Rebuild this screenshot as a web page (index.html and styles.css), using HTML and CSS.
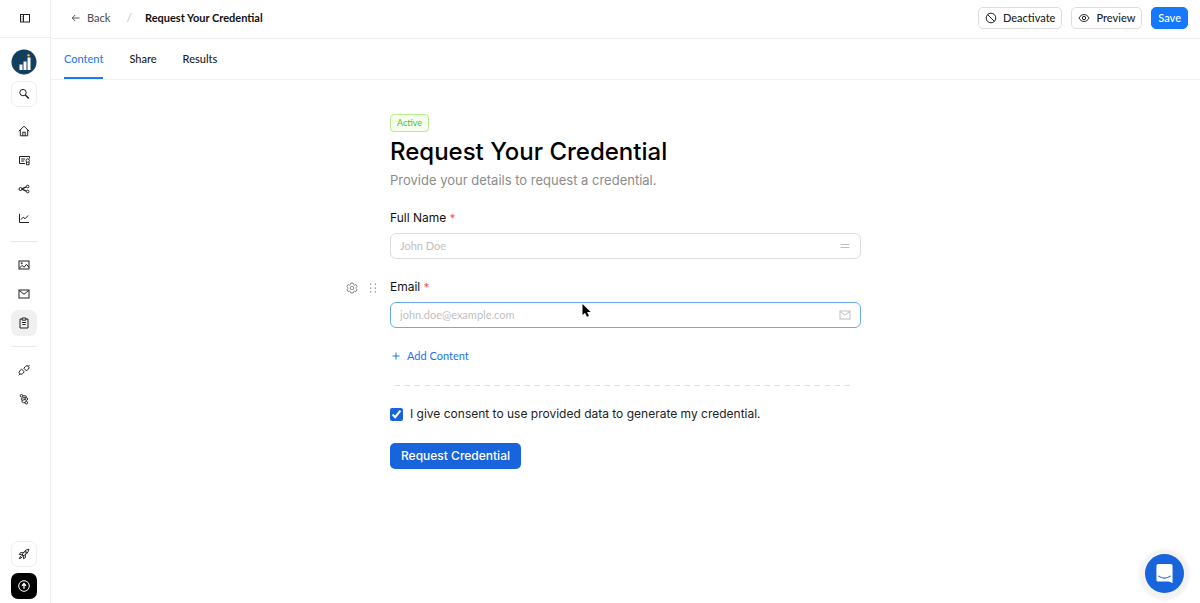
FILE: index.html
```html
<!DOCTYPE html>
<html lang="en">
<head>
  <meta charset="utf-8">
  <meta name="viewport" content="width=device-width, initial-scale=1">
  <title>Request Your Credential</title>
  <link rel="stylesheet" href="styles.css">
</head>
<body>
  <div class="app">
    <aside class="sidebar">
      <div class="sidebar_top">
        <button class="icon_btn" type="button" aria-label="Toggle sidebar">
          <svg class="icon" viewBox="0 0 12 12"><rect x="1.500" y="2.500" width="9" height="7.500"/><path d="M4.500 2.500v7.500M2.700 4.400h.8M2.700 6.200h.8M2.700 8h.8"/></svg>
        </button>
      </div>
      <nav class="sidebar_nav">
        <a class="logo" href="#" aria-label="Workspace">
          <svg class="logo_img" viewBox="0 0 26 26">
            <circle cx="13" cy="13" r="12.500" fill="#133f5f"/>
            <path d="M8.500 15.500h3V21h-3zM12.500 12.500h3V21h-3zM16.500 8.500h3V21h-3z" fill="#fff"/>
            <circle cx="17.500" cy="6.200" r="1.200" fill="#f0b440"/>
          </svg>
        </a>
        <button class="icon_btn boxed search" type="button" aria-label="Search">
          <svg class="icon" viewBox="0 0 12 12"><circle cx="5" cy="4.600" r="3.200"/><path d="M7.300 7l3.500 3.500" stroke-width="1.600"/></svg>
        </button>
        <a class="icon_btn" href="#" aria-label="Home">
          <svg class="icon" viewBox="0 0 12 12"><path d="M.8 6.200L6 1.200l5.200 5M2.300 5v5.800h7.400V5M4.800 10.800V7.200h2.400v3.600"/></svg>
        </a>
        <a class="icon_btn" href="#" aria-label="Credentials">
          <svg class="icon" viewBox="0 0 12 12"><path d="M7 9.500H1.500v-7h10v2M3.200 5h3.800M3.200 7h3"/><circle cx="9.700" cy="6.500" r="1.700"/><path d="M8.400 8v2.800h2.700V8"/></svg>
        </a>
        <a class="icon_btn" href="#" aria-label="Pathways">
          <svg class="icon" viewBox="0 0 12 12"><circle cx="2.500" cy="6" r="1.500"/><circle cx="9.700" cy="3.500" r="1.300"/><circle cx="9.700" cy="8.500" r="1.300"/><path d="M4 5.800l4.300-2M4 6.200l4.300 2" stroke-width="1.400"/></svg>
        </a>
        <a class="icon_btn" href="#" aria-label="Analytics">
          <svg class="icon" viewBox="0 0 12 12"><path d="M1.500 1.800v8.700h9.500M3 7.500l2.200-2.300 1.800 1.500L10.200 3.500"/></svg>
        </a>
        <hr class="divider">
        <a class="icon_btn" href="#" aria-label="Designs">
          <svg class="icon" viewBox="0 0 12 12"><rect x="1" y="2" width="10" height="8"/><path d="M1.500 9l2.700-2.700L6 8.300l2.500-3L11 8.500"/><circle cx="3.700" cy="4.200" r=".6"/></svg>
        </a>
        <a class="icon_btn" href="#" aria-label="Emails">
          <svg class="icon" viewBox="0 0 12 12"><rect x="1" y="2" width="10" height="8"/><path d="M1.300 2.500L6 6.200l4.700-3.700"/></svg>
        </a>
        <a class="icon_btn active" href="#" aria-label="Forms">
          <svg class="icon" viewBox="0 0 12 12"><path d="M4 2H2v9h8V2H8M4.200 1h3.600v2.200H4.200zM4 5.500h4M4.500 7.500h3"/></svg>
        </a>
        <hr class="divider">
        <a class="icon_btn" href="#" aria-label="Integrations">
          <svg class="icon" viewBox="0 0 12 12"><path d="M5.800 4.200l1.900-1.900a1.900 1.900 0 0 1 2.700 0 1.900 1.900 0 0 1 0 2.700L8.500 6.900zM3.500 5.100L1.700 7a1.900 1.900 0 0 0 0 2.700 1.900 1.900 0 0 0 2.700 0l1.900-1.900zM10.300 2.300l1.200-1.200M.7 11.200l1.200-1.200"/></svg>
        </a>
        <a class="icon_btn" href="#" aria-label="Webhooks">
          <svg class="icon" viewBox="0 0 12 12"><circle cx="3.500" cy="2.800" r="1.300"/><circle cx="8.300" cy="6" r="1.300"/><circle cx="8.300" cy="9.700" r="1.300"/><path d="M4.800 2.800h2.500c1.500 0 1.500 1.600 0 1.700L4.500 5c-1.600.2-1.700 2-.2 2.200l2.700-.6M4.300 7.200c-1 1.200 0 2.400 1.300 2.500H7"/></svg>
        </a>
      </nav>
      <div class="sidebar_bottom">
        <button class="icon_btn boxed" type="button" aria-label="Get started">
          <svg class="icon" viewBox="0 0 12 12"><path d="M4 7.900C4.700 4.500 7 1.800 10.800 1.200 10.300 5 7.500 7.400 4.100 8zM4.800 4.600L2.400 4.700 1.300 6.500l2.600.2M7.400 7.200l-.1 2.400-1.800 1.100-.2-2.600M2.700 8L1.200 10.800 4 9.300"/><circle cx="7.700" cy="4.300" r=".8"/></svg>
        </button>
        <button class="icon_btn dark" type="button" aria-label="Upgrade">
          <svg class="icon" viewBox="0 0 12 12"><circle cx="6" cy="6" r="5.300"/><path d="M6 8.700V4M4 5.700l2-2.200 2 2.200" stroke-width="1.300"/></svg>
        </button>
      </div>
    </aside>

    <div class="page">
      <header class="topbar">
        <a class="back" href="#">
          <svg class="icon" viewBox="0 0 12 12"><path d="M9.500 6H2.200M5.200 3L2.200 6l3 3"/></svg>
          Back
        </a>
        <span class="slash">/</span>
        <span class="crumb">Request Your Credential</span>
        <div class="actions">
          <button class="btn" type="button">
            <svg class="icon" viewBox="0 0 12 12"><circle cx="6" cy="6" r="4.800"/><path d="M2.600 2.600l6.800 6.800"/></svg>
            Deactivate
          </button>
          <button class="btn" type="button">
            <svg class="icon" viewBox="0 0 12 12"><path d="M1 6c2.200-4.600 7.800-4.600 10 0-2.200 4.600-7.800 4.600-10 0z"/><circle cx="6" cy="6" r="1.700"/></svg>
            Preview
          </button>
          <button class="btn btn_save" type="button">Save</button>
        </div>
      </header>

      <nav class="tabs">
        <a class="tab tab_on" href="#">Content</a>
        <a class="tab" href="#">Share</a>
        <a class="tab" href="#">Results</a>
      </nav>

      <main class="main">
        <form class="form">
          <div class="intro">
            <span class="badge">Active</span>
            <h1 class="title">Request Your Credential</h1>
            <p class="subtitle">Provide your details to request a credential.</p>
          </div>

          <div class="field">
            <label class="label" for="full_name">Full Name <span class="req">*</span></label>
            <div class="input_wrap">
              <input class="input" id="full_name" type="text" placeholder="John Doe">
              <svg class="icon input_icon" viewBox="0 0 12 12"><path d="M1.500 4.500h9M1.500 7.500h9"/></svg>
            </div>
          </div>

          <div class="tools">
            <button class="tool" type="button" aria-label="Field settings">
              <svg class="icon" viewBox="0 0 12 12"><path d="M4.900 1h2.200l.4 1.500 1 .6L10 2.700l1.100 1.900L10 5.700v.9l1.100 1-1.100 1.900-1.500-.4-1 .6L7.100 11H4.900l-.4-1.300-1-.6-1.500.4L.9 7.600l1.100-1v-.9L.9 4.600 2 2.700l1.500.4 1-.6z"/><circle cx="6" cy="6" r="1.700"/></svg>
            </button>
            <button class="tool" type="button" aria-label="Move field">
              <svg class="icon dots" viewBox="0 0 12 12"><path d="M3 1.500h1.300v1.300H3zM3 5.400h1.300v1.300H3zM3 9.200h1.300v1.300H3zM7.700 1.500H9v1.300H7.700zM7.700 5.400H9v1.300H7.700zM7.700 9.200H9v1.300H7.700z"/></svg>
            </button>
          </div>
          <div class="field">
            <label class="label" for="email">Email <span class="req">*</span></label>
            <div class="input_wrap focused">
              <input class="input" id="email" type="email" placeholder="john.doe@example.com">
              <svg class="icon input_icon" viewBox="0 0 12 12"><rect x="1" y="2" width="10" height="8"/><path d="M1.300 2.500L6 6.200l4.700-3.700"/></svg>
            </div>
          </div>

          <button class="add" type="button">
            <svg class="icon" viewBox="0 0 12 12"><path d="M6 2.500v7M2.500 6h7"/></svg>
            Add Content
          </button>
          <div class="dashes"></div>

          <label class="consent">
            <input class="check" type="checkbox" checked>
            I give consent to use provided data to generate my credential.
          </label>
          <button class="submit" type="button">Request Credential</button>
        </form>
      </main>
    </div>
  </div>

  <svg class="cursor" viewBox="0 0 12 16"><path d="M1.500 1v11l2.600-2.300 1.800 4.100 2-.9-1.800-4h3.500z"/></svg>

  <button class="chat" type="button" aria-label="Open chat">
    <svg class="chat_icon" viewBox="0 0 20 22">
      <path d="M3.500 1h13A2 2 0 0 1 18.500 3v18l-4-1.500h-11a2 2 0 0 1-2-2V3a2 2 0 0 1 2-2z" fill="#fff"/>
      <path d="M4 13.800c3.500 2.800 8.500 2.800 12 0" fill="none" stroke="#1764dc" stroke-width="1.200" stroke-linecap="round"/>
    </svg>
  </button>
</body>
</html>
```
FILE: styles.css
```css
* {
  box-sizing: border-box;
}
body {
  margin: 0;
  background: #fff;
  color: #222;
  font-family: Lato, "Noto Sans", sans-serif;
  font-size: 11px;
  font-weight: 500;
  line-height: 16px;
}
a {
  color: inherit;
  text-decoration: none;
}
button {
  font: inherit;
  color: inherit;
  padding: 0;
  border: 0;
  background: none;
  cursor: pointer;
}
.icon {
  display: block;
  flex: none;
  width: 12px;
  height: 12px;
  fill: none;
  stroke: currentColor;
  stroke-width: 1;
}
.app {
  display: flex;
  min-height: 100vh;
}

/* sidebar */
.sidebar {
  display: flex;
  flex-direction: column;
  width: 51px;
  border-right: 1px solid #f0f0f0;
}
.sidebar_top {
  display: flex;
  align-items: center;
  justify-content: center;
  height: 38px;
  padding-bottom: 2px;
  border-bottom: 1px solid #f0f0f0;
}
.sidebar_nav {
  display: flex;
  flex-direction: column;
  align-items: center;
  gap: 3px;
  padding: 11px 2px 0 0;
}
.logo_img {
  display: block;
  width: 26px;
  height: 26px;
}
.icon_btn {
  display: flex;
  flex: none;
  align-items: center;
  justify-content: center;
  width: 26px;
  height: 26px;
  border-radius: 7px;
}
.boxed {
  border: 1px solid #eee;
}
.search {
  margin: 3px 0 8px;
}
.active {
  background: #f0f0f0;
}
.dark {
  background: #000;
  color: #fff;
}
.divider {
  width: 26px;
  height: 1px;
  margin: 7px 0;
  border: 0;
  background: #eaeaea;
}
.sidebar_bottom {
  display: flex;
  flex-direction: column;
  align-items: center;
  gap: 6px;
  margin-top: auto;
  padding: 0 2px 4px 0;
}

/* header */
.page {
  flex: 1;
  min-width: 0;
}
.topbar {
  display: flex;
  align-items: center;
  height: 39px;
  padding: 0 12px 3px 19px;
  border-bottom: 1px solid #f0f0f0;
}
.back {
  display: flex;
  align-items: center;
  gap: 5px;
  color: #555;
}
.slash {
  margin: 0 13px 0 16px;
  color: #ccc;
  font-size: 12px;
}
.crumb {
  color: #111;
  font-weight: 700;
}
.actions {
  display: flex;
  gap: 9px;
  margin-left: auto;
}
.btn {
  display: flex;
  align-items: center;
  gap: 6px;
  height: 22px;
  padding: 0 6px;
  border: 1px solid #ddd;
  border-radius: 5px;
}
.btn_save {
  border-color: #1677ff;
  background: #1677ff;
  color: #fff;
}
.tabs {
  display: flex;
  gap: 26px;
  height: 41px;
  padding: 0 13px;
  border-bottom: 1px solid #f0f0f0;
}
.tab {
  padding-top: 12px;
  border-bottom: 2px solid transparent;
}
.tab_on {
  border-color: #1677ff;
  color: #2a7bee;
}

/* form: the middle column holds content, the left one the field tools */
.form {
  display: grid;
  grid-template-columns: 1fr minmax(0, 471px) 1fr;
  justify-items: start;
  padding-top: 34px;
  font-family: Inter, sans-serif;
  font-size: 12px;
  font-weight: 400;
}
.form > * {
  grid-column: 2;
}
.badge {
  display: block;
  width: fit-content;
  padding: 0 6px;
  border: 1px solid #b7eb8f;
  border-radius: 4px;
  background: #f6ffed;
  color: #52c41a;
  font-family: Lato, "Noto Sans", sans-serif;
  font-size: 9px;
}
.title {
  margin: 4px 0;
  color: #000;
  font-size: 24px;
  font-weight: 500;
  line-height: 32px;
}
.subtitle {
  margin: 0;
  color: #8c8c8c;
  font-size: 13px;
}
.form > .field {
  width: 100%;
  margin-top: 22px;
}
.form > .tools + .field {
  margin-top: 20px;
}
.label {
  display: block;
  margin-bottom: 7px;
  color: #111;
}
.req {
  color: #ff4d4f;
  font-size: 11px;
}
.input_wrap {
  display: flex;
  align-items: center;
  height: 26px;
  padding: 0 9px;
  border: 1px solid #ddd;
  border-radius: 6px;
}
.focused {
  border-color: #69a8f5;
}
.input {
  flex: 1;
  min-width: 0;
  padding: 0;
  border: 0;
  outline: 0;
  background: none;
  color: #222;
  font: 11px/16px Lato, "Noto Sans", sans-serif;
}
.input::placeholder {
  color: #bfbfbf;
}
.input_icon {
  color: #bfbfbf;
}
.form > .tools {
  display: flex;
  grid-column: 1;
  justify-self: end;
  gap: 9px;
  padding: 23px 11px 0 0;
}
.tool {
  display: block;
  height: 12px;
  color: #888;
}
.dots {
  fill: currentColor;
  stroke: none;
}
.add {
  display: flex;
  align-items: center;
  gap: 5px;
  margin-top: 20px;
  color: #1c74e8;
  font-family: Lato, "Noto Sans", sans-serif;
  font-size: 11px;
}
.dashes {
  justify-self: stretch;
  height: 1px;
  margin: 21px 8px 20px 5px;
  background: repeating-linear-gradient(to right, #ddd 0 5px, transparent 5px 10px);
}
.consent {
  display: flex;
  align-items: center;
  gap: 7px;
}
.check {
  width: 13px;
  height: 13px;
  margin: 0;
  accent-color: #1764dc;
}
.submit {
  height: 26px;
  margin-top: 21px;
  padding: 0 11px;
  border-radius: 5px;
  background: #1764dc;
  color: #fff;
  font-weight: 500;
}

/* floating things */
.cursor {
  position: absolute;
  top: 303px;
  left: 581px;
  width: 12px;
  height: 16px;
  fill: #000;
  stroke: #fff;
  stroke-width: 1;
  paint-order: stroke;
}
.chat {
  display: flex;
  position: fixed;
  right: 16px;
  bottom: 10px;
  align-items: center;
  justify-content: center;
  width: 39px;
  height: 39px;
  border-radius: 50%;
  background: #1764dc;
  box-shadow: 0 1px 3px 6px #f3f3f3;
}
.chat_icon {
  width: 19px;
  height: 21px;
}
```
